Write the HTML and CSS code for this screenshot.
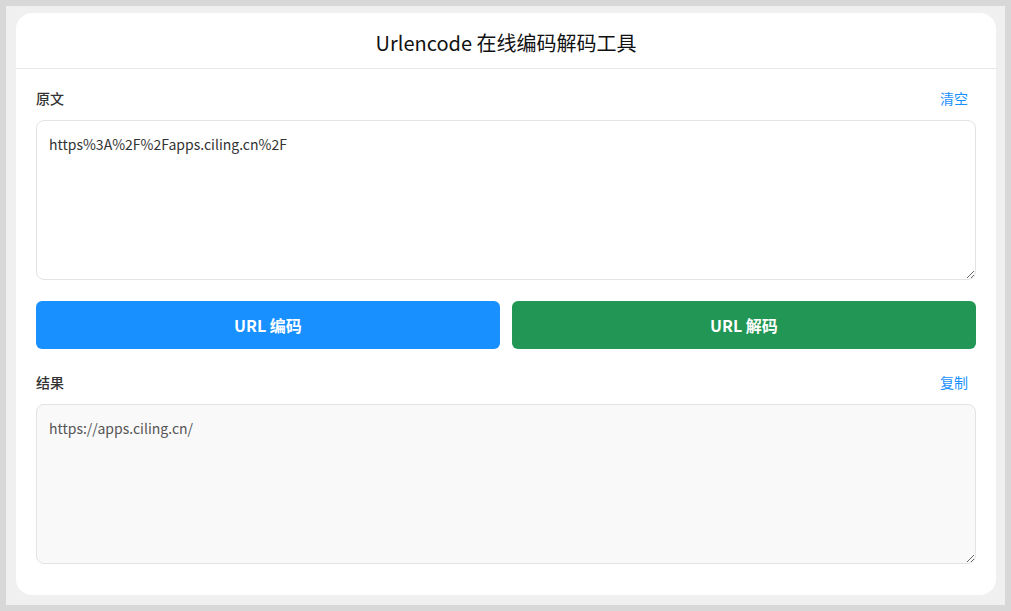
FILE: index.html
```html
<!DOCTYPE html>
<html>
<head>
    <title>Urlencode 在线编码解码工具</title>
    <link rel="stylesheet" href="styles.css">
</head>
<body>
    <div class="card">
        <div class="header">Urlencode 在线编码解码工具</div>
        <div class="content">
            <div class="label-row">
                <span class="label">原文</span>
                <a class="link">清空</a>
            </div>
            <textarea class="box" id="source">https%3A%2F%2Fapps.ciling.cn%2F</textarea>
            <div class="buttons">
                <button class="btn encode" type="button">URL 编码</button>
                <button class="btn decode" type="button">URL 解码</button>
            </div>
            <div class="label-row">
                <span class="label">结果</span>
                <a class="link">复制</a>
            </div>
            <textarea class="box result" id="result" readonly>https://apps.ciling.cn/</textarea>
        </div>
    </div>
</body>
</html>
```

FILE: styles.css
```css
html {
    background: #d8d8d8;
}
body {
    margin: 6px;
    height: 599px;
    box-sizing: border-box;
    padding: 7px 9px 10px 10px;
    background: #f0f0f0;
    font-family: "Noto Sans CJK SC", "Noto Sans", sans-serif;
    color: #333;
}
.card {
    background: #fff;
    border-radius: 16px;
    height: 582px;
    overflow: hidden;
}
.header {
    height: 56px;
    border-bottom: 1px solid #e8e8e8;
    display: flex;
    align-items: center;
    justify-content: center;
    font-size: 20px;
    color: #111;
    padding-top: 4px;
    box-sizing: border-box;
}
.content {
    padding: 19px 20px 30px;
}
.label-row {
    display: flex;
    justify-content: space-between;
    align-items: center;
    height: 20px;
    margin-bottom: 12px;
}
.label {
    font-size: 14px;
    font-weight: 500;
    color: #333;
}
.link {
    font-size: 14px;
    color: #1890ff;
    padding: 0 8px;
    cursor: pointer;
}
.box {
    display: block;
    width: 100%;
    height: 160px;
    box-sizing: border-box;
    border: 1px solid #e3e3e3;
    border-radius: 8px;
    padding: 12px;
    font-family: "Noto Sans CJK SC", "Noto Sans", sans-serif;
    font-size: 14px;
    line-height: 22px;
    color: #333;
    resize: vertical;
    outline: none;
}
.result {
    margin-top: 2px;
    background: #f9f9f9;
    color: #555;
}
.buttons {
    display: flex;
    gap: 12px;
    margin: 21px 0 23px;
}
.btn {
    flex: 1;
    height: 48px;
    border: none;
    border-radius: 6px;
    color: #fff;
    font-family: "Noto Sans CJK SC", "Noto Sans", sans-serif;
    font-size: 16px;
    font-weight: bold;
    cursor: pointer;
}
.encode {
    background: #1890ff;
}
.decode {
    background: #229654;
}
```
